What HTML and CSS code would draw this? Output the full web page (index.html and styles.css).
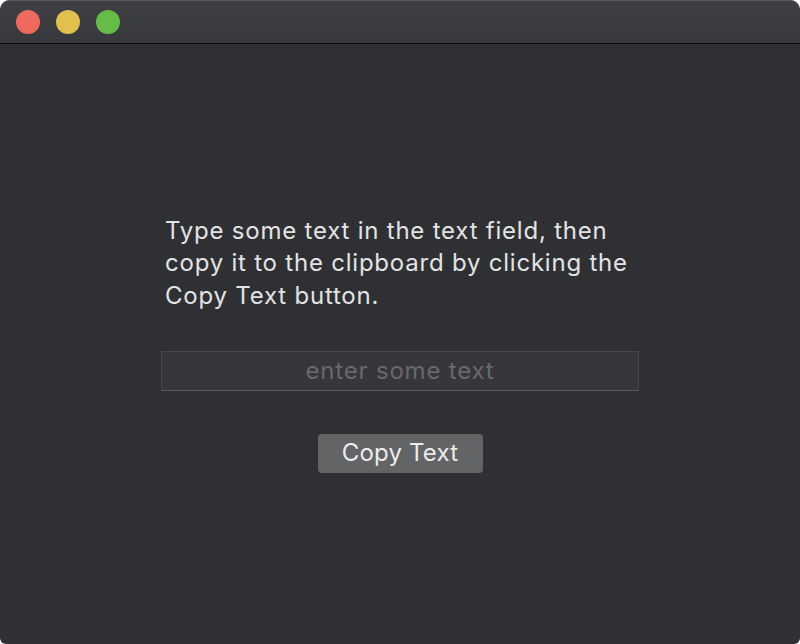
FILE: index.html
```html
<!DOCTYPE html>
<html>
<head>
<meta charset="utf-8">
<link rel="stylesheet" href="styles.css">
</head>
<body>
<div class="window">
  <div class="titlebar">
    <span class="light red"></span>
    <span class="light yellow"></span>
    <span class="light green"></span>
  </div>
  <div class="content">
    <p class="intro">Type some text in the text field, then copy it to the clipboard by clicking the Copy Text button.</p>
    <input class="field" type="text" placeholder="enter some text">
    <button class="btn">Copy Text</button>
  </div>
</div>
</body>
</html>
```
FILE: styles.css
```css
html, body {
  margin: 0;
  padding: 0;
  background: #ffffff;
}
.window {
  width: 800px;
  height: 644px;
  background: #2f3034;
  border-radius: 10px 10px 6px 6px;
  overflow: hidden;
  display: flex;
  flex-direction: column;
  font-family: Inter, "Open Sans", "Liberation Sans", sans-serif;
}
.titlebar {
  flex: none;
  background: linear-gradient(#3f4044, #38393d);
  border-top: 1px solid #5a5b5e;
  box-sizing: border-box;
  border-bottom: 1px solid #0c0c0d;
  height: 44px;
  display: flex;
  align-items: center;
  padding-left: 16px;
  gap: 16px;
}
.light {
  width: 24px;
  height: 24px;
  border-radius: 50%;
  margin-top: -1px;
}
.red { background: #ee6a5f; }
.yellow { background: #e2c04e; }
.green { background: #65bd47; }
.content {
  flex: 1;
  display: flex;
  flex-direction: column;
  align-items: center;
}
.intro {
  margin: 171px 0 0 165px;
  width: 485px;
  align-self: flex-start;
  color: #e3e3e4;
  font-size: 24px;
  line-height: 32.3px;
  letter-spacing: 0.78px;
}
.field {
  margin-top: 39px;
  width: 478px;
  height: 40px;
  box-sizing: border-box;
  background: #36373b;
  border: 1px solid #46474b;
  border-bottom-color: #5d5e62;
  color: #e3e3e4;
  font-family: inherit;
  font-size: 24px;
  letter-spacing: 0.8px;
  text-align: center;
  padding: 0 0 1px 0;
  outline: none;
}
.field::placeholder {
  color: #68696c;
}
.btn {
  margin-top: 43px;
  width: 165px;
  height: 39px;
  background: #636466;
  border: none;
  border-radius: 4px;
  color: #ececec;
  font-family: inherit;
  font-size: 24px;
  letter-spacing: 0.2px;
  padding: 0;
  line-height: 38px;
}
```
